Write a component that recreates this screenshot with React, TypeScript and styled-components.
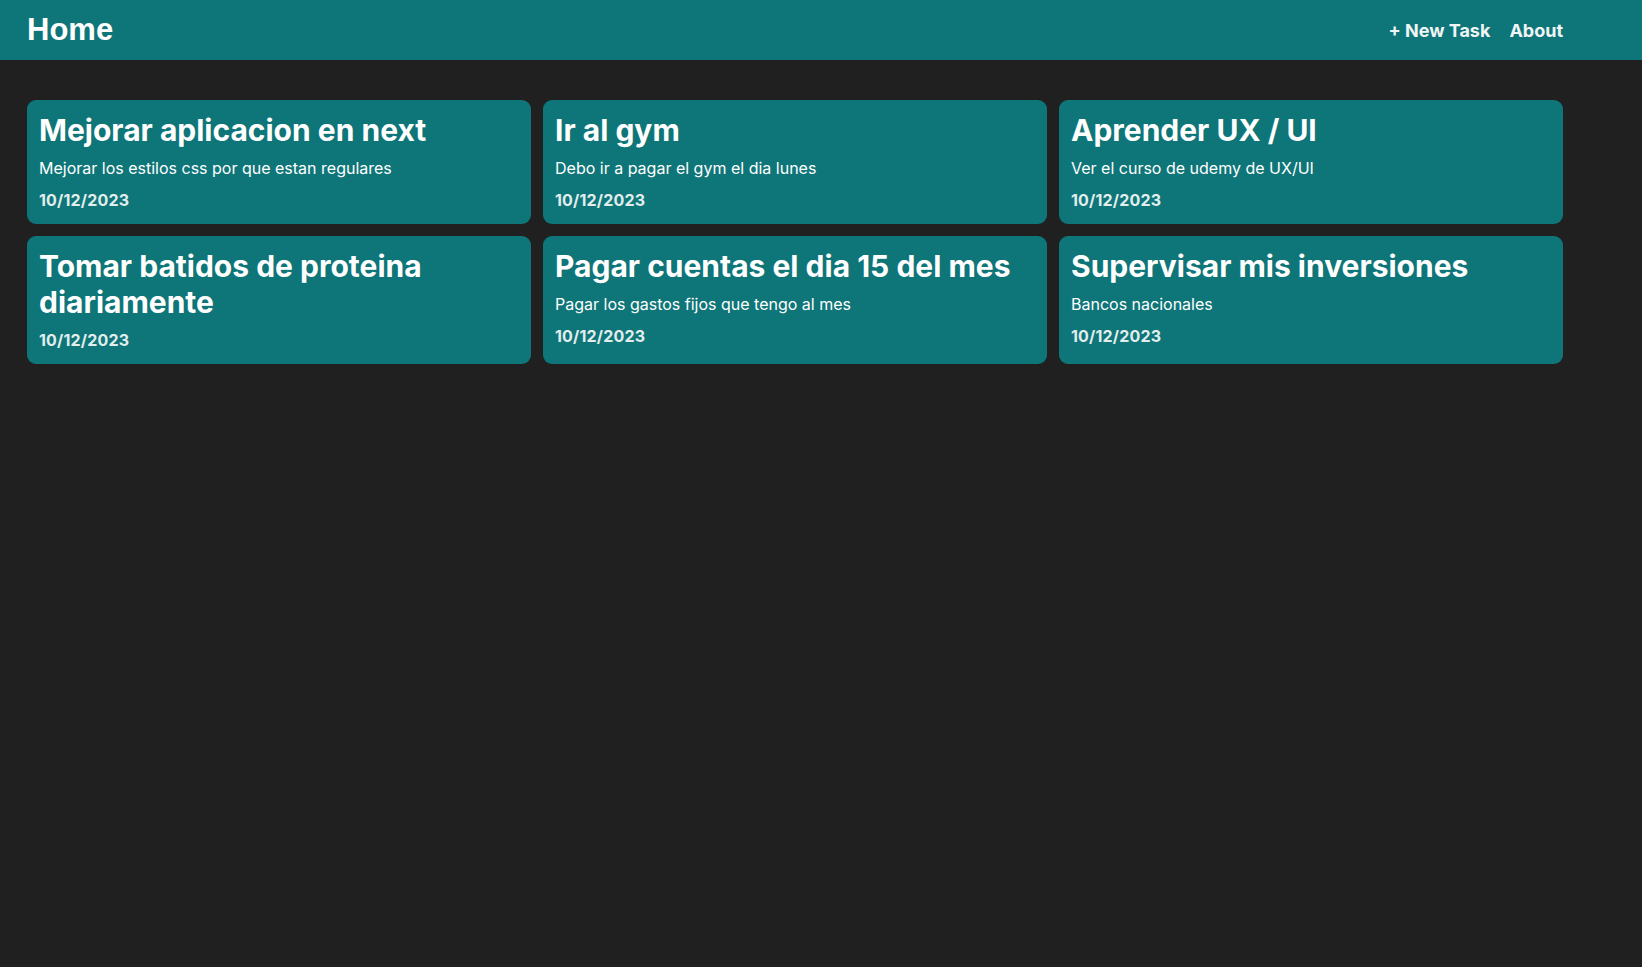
import React from "react";
import styled, { createGlobalStyle } from "styled-components";

const GlobalStyle = createGlobalStyle`
  * { box-sizing: border-box; }
  html, body { margin: 0; padding: 0; }
  body {
    background: #202020;
    color: #ffffff;
    font-family: Inter, "Noto Sans", sans-serif;
    min-height: 100vh;
  }
`;

const NavBar = styled.header`
  height: 60px;
  background: #0e7578;
`;

const NavInner = styled.div`
  width: 1536px;
  margin-left: 27px;
  height: 100%;
  display: flex;
  align-items: center;
  justify-content: space-between;
`;

const Brand = styled.a`
  font-family: "Liberation Sans", Arial, sans-serif;
  font-size: 31px;
  font-weight: 700;
  color: #ffffff;
  text-decoration: none;
`;

const NavLinks = styled.nav`
  display: flex;
  align-items: center;
  gap: 19px;
`;

const NavLink = styled.a`
  font-family: Inter, sans-serif;
  font-size: 18px;
  font-weight: 700;
  color: #f1f5f5;
  text-decoration: none;
`;

const Main = styled.main`
  width: 1536px;
  margin-left: 27px;
  padding-top: 40px;
`;

const Grid = styled.div`
  display: grid;
  grid-template-columns: repeat(3, 1fr);
  gap: 12px;
`;

const Card = styled.div`
  background: #0e7578;
  border-radius: 9px;
  padding: 12px;
  display: flex;
  flex-direction: column;
  gap: 8px;
  cursor: pointer;
`;

const Title = styled.h3`
  margin: 0;
  font-size: 30px;
  line-height: 36px;
  font-weight: 700;
  color: #ffffff;
`;

const Description = styled.p`
  margin: 0;
  font-size: 16px;
  line-height: 24px;
  color: #ffffff;
`;

const DateText = styled.p`
  margin: 0;
  font-size: 16px;
  line-height: 24px;
  font-weight: 700;
  letter-spacing: 0.2px;
  color: #e2eeee;
`;

type Task = { title: string; description?: string; date: string };

const tasks: Task[] = [
  { title: "Mejorar aplicacion en next", description: "Mejorar los estilos css por que estan regulares", date: "10/12/2023" },
  { title: "Ir al gym", description: "Debo ir a pagar el gym el dia lunes", date: "10/12/2023" },
  { title: "Aprender UX / UI", description: "Ver el curso de udemy de UX/UI", date: "10/12/2023" },
  { title: "Tomar batidos de proteina diariamente", date: "10/12/2023" },
  { title: "Pagar cuentas el dia 15 del mes", description: "Pagar los gastos fijos que tengo al mes", date: "10/12/2023" },
  { title: "Supervisar mis inversiones", description: "Bancos nacionales", date: "10/12/2023" },
];

export default function App() {
  return (
    <>
      <GlobalStyle />
      <NavBar>
        <NavInner>
          <Brand href="#">Home</Brand>
          <NavLinks>
            <NavLink href="#">+ New Task</NavLink>
            <NavLink href="#">About</NavLink>
          </NavLinks>
        </NavInner>
      </NavBar>
      <Main>
        <Grid>
          {tasks.map((t, i) => (
            <Card key={i}>
              <Title>{t.title}</Title>
              {t.description && <Description>{t.description}</Description>}
              <DateText>{t.date}</DateText>
            </Card>
          ))}
        </Grid>
      </Main>
    </>
  );
}
